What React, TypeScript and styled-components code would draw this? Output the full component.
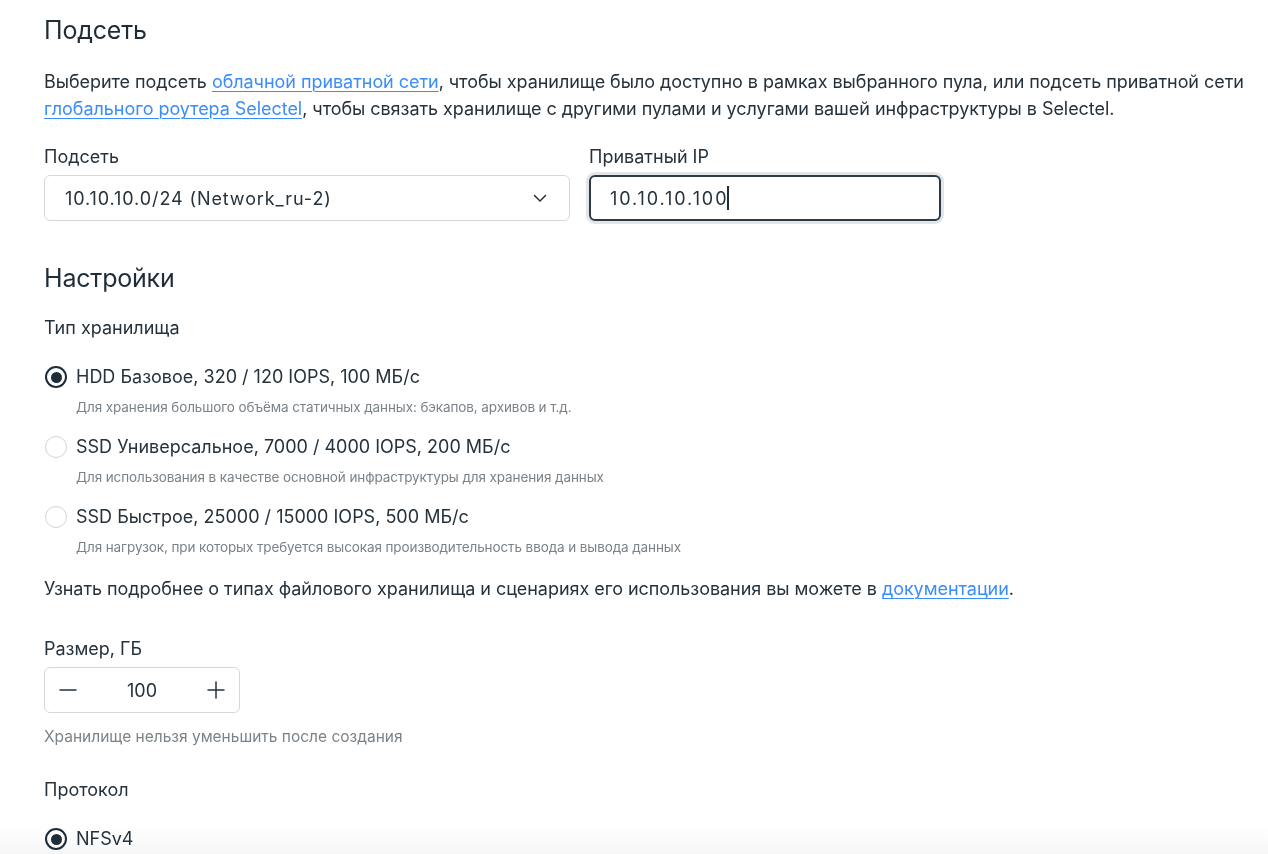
import React from "react";
import styled, { createGlobalStyle } from "styled-components";

const Global = createGlobalStyle`
  html, body { margin: 0; padding: 0; background: #ffffff; }
  body { font-family: Inter, "Noto Sans", sans-serif; color: #25323c; }
  * { box-sizing: border-box; }
`;

const Page = styled.div`
  position: relative;
  z-index: 1;
  padding: 14px 24px 0 44px;
  display: flex;
  flex-direction: column;
`;

const Heading = styled.h2<{ $top?: number }>`
  margin: ${(p) => p.$top ?? 0}px 0 0;
  font-size: 25px;
  line-height: 32px;
  font-weight: 400;
  color: #1f2d38;
  letter-spacing: -0.2px;
`;

const Paragraph = styled.p<{ $top?: number }>`
  margin: ${(p) => p.$top ?? 0}px 0 0;
  font-size: 18px;
  line-height: 27px;
  color: #25323c;
  letter-spacing: -0.05px;
`;

const Link = styled.a`
  color: #3a8dfb;
  text-decoration: underline;
  text-underline-offset: 3px;
  text-decoration-thickness: 1px;
`;

const FieldRow = styled.div`
  display: flex;
  gap: 19px;
  margin-top: 23px;
`;

const Field = styled.div<{ $width: number }>`
  width: ${(p) => p.$width}px;
  display: flex;
  flex-direction: column;
`;

const Label = styled.div<{ $top?: number }>`
  margin-top: ${(p) => p.$top ?? 0}px;
  font-size: 18px;
  line-height: 24px;
  color: #25323c;
`;

const Select = styled.div`
  margin-top: 6px;
  height: 46px;
  border: 1px solid #d3d8dc;
  border-radius: 6px;
  display: flex;
  align-items: center;
  justify-content: space-between;
  padding: 0 20px 0 20px;
  font-size: 18px;
  color: #25323c;
  letter-spacing: 0.9px;
`;

const InputWrap = styled.div`
  margin-top: 6px;
  height: 46px;
  border: 2px solid #2c3a46;
  border-radius: 6px;
  box-shadow: 0 0 0 3px #e2e6e9;
  display: flex;
  align-items: center;
  padding: 0 19px;
  font-size: 18px;
  color: #25323c;
  letter-spacing: 1.9px;
`;

const Caret = styled.span`
  display: inline-block;
  width: 2px;
  height: 24px;
  background: #1f2d38;
  margin-left: -1px;
`;

const RadioList = styled.div`
  display: flex;
  flex-direction: column;
  margin-top: 25px;
`;

const RadioOption = styled.div<{ $withDesc?: boolean }>`
  display: grid;
  grid-template-columns: 24px 1fr;
  column-gap: 8px;
  row-gap: 9px;
  height: ${(p) => (p.$withDesc ? "70px" : "auto")};
  align-content: start;
`;

const RadioCircle = styled.span<{ $checked?: boolean }>`
  width: 22px;
  height: 22px;
  border-radius: 50%;
  border: ${(p) => (p.$checked ? "2px solid #1f2d38" : "1px solid #cfd4d8")};
  display: flex;
  align-items: center;
  justify-content: center;
  align-self: center;
  justify-self: center;
  &::after {
    content: "";
    display: ${(p) => (p.$checked ? "block" : "none")};
    width: 11px;
    height: 11px;
    border-radius: 50%;
    background: #1f2d38;
  }
`;

const RadioTitle = styled.span`
  font-size: 18px;
  line-height: 24px;
  color: #25323c;
`;

const RadioDesc = styled.span`
  grid-column: 2;
  font-size: 13.5px;
  line-height: 18px;
  color: #7b8389;
  letter-spacing: -0.1px;
`;

const Stepper = styled.div`
  margin-top: 6px;
  width: 196px;
  height: 46px;
  border: 1px solid #d3d8dc;
  border-radius: 6px;
  display: grid;
  grid-template-columns: 46px 1fr 46px;
  align-items: center;
  justify-items: center;
  font-size: 18px;
  color: #25323c;
`;

const StepButton = styled.span`
  display: flex;
  align-items: center;
  justify-content: center;
  width: 24px;
  height: 24px;
  color: #25323c;
`;

const Hint = styled.div`
  margin-top: 14px;
  font-size: 15.5px;
  line-height: 20px;
  color: #7b8389;
`;

const BottomFade = styled.div`
  position: fixed;
  left: 0;
  right: 0;
  bottom: 0;
  z-index: 0;
  height: 26px;
  background: linear-gradient(to bottom, rgba(248, 248, 248, 0), rgba(246, 246, 246, 1));
  pointer-events: none;
`;

const options = [
  {
    title: "HDD Базовое, 320 / 120 IOPS, 100 МБ/с",
    desc: "Для хранения большого объёма статичных данных: бэкапов, архивов и т.д.",
    checked: true,
  },
  {
    title: "SSD Универсальное, 7000 / 4000 IOPS, 200 МБ/с",
    desc: "Для использования в качестве основной инфраструктуры для хранения данных",
  },
  {
    title: "SSD Быстрое, 25000 / 15000 IOPS, 500 МБ/с",
    desc: "Для нагрузок, при которых требуется высокая производительность ввода и вывода данных",
  },
];

export default function App() {
  return (
    <>
      <Global />
      <BottomFade />
      <Page>
        <Heading>Подсеть</Heading>
        <Paragraph $top={22}>
          Выберите подсеть <Link href="#">облачной приватной сети</Link>, чтобы хранилище было доступно в рамках
          выбранного пула, или подсеть приватной сети <Link href="#">глобального роутера Selectel</Link>, чтобы
          связать хранилище с другими пулами и услугами вашей инфраструктуры в Selectel.
        </Paragraph>
        <FieldRow>
          <Field $width={526}>
            <Label>Подсеть</Label>
            <Select>
              <span>10.10.10.0/24 (Network_ru-2)</span>
              <svg width="18" height="18" viewBox="0 0 18 18" fill="none">
                <path d="M3.5 6.5L9 12L14.5 6.5" stroke="#25323c" strokeWidth="1.5" strokeLinecap="round" strokeLinejoin="round" />
              </svg>
            </Select>
          </Field>
          <Field $width={352}>
            <Label>Приватный IP</Label>
            <InputWrap>
              <span>10.10.10.100</span>
              <Caret />
            </InputWrap>
          </Field>
        </FieldRow>

        <Heading $top={41}>Настройки</Heading>
        <Label $top={22}>Тип хранилища</Label>
        <RadioList>
          {options.map((o) => (
            <RadioOption key={o.title} $withDesc>
              <RadioCircle $checked={o.checked} />
              <RadioTitle>{o.title}</RadioTitle>
              <RadioDesc>{o.desc}</RadioDesc>
            </RadioOption>
          ))}
        </RadioList>
        <Paragraph $top={0}>
          Узнать подробнее о типах файлового хранилища и сценариях его использования вы можете в{" "}
          <Link href="#">документации</Link>.
        </Paragraph>

        <Label $top={35}>Размер, ГБ</Label>
        <Stepper>
          <StepButton>
            <svg width="20" height="20" viewBox="0 0 20 20" fill="none">
              <path d="M2 10H18" stroke="#25323c" strokeWidth="1.5" strokeLinecap="round" />
            </svg>
          </StepButton>
          <span>100</span>
          <StepButton>
            <svg width="20" height="20" viewBox="0 0 20 20" fill="none">
              <path d="M2 10H18M10 2V18" stroke="#25323c" strokeWidth="1.5" strokeLinecap="round" />
            </svg>
          </StepButton>
        </Stepper>
        <Hint>Хранилище нельзя уменьшить после создания</Hint>

        <Label $top={31}>Протокол</Label>
        <RadioList>
          <RadioOption>
            <RadioCircle $checked />
            <RadioTitle>NFSv4</RadioTitle>
          </RadioOption>
        </RadioList>
      </Page>
    </>
  );
}
